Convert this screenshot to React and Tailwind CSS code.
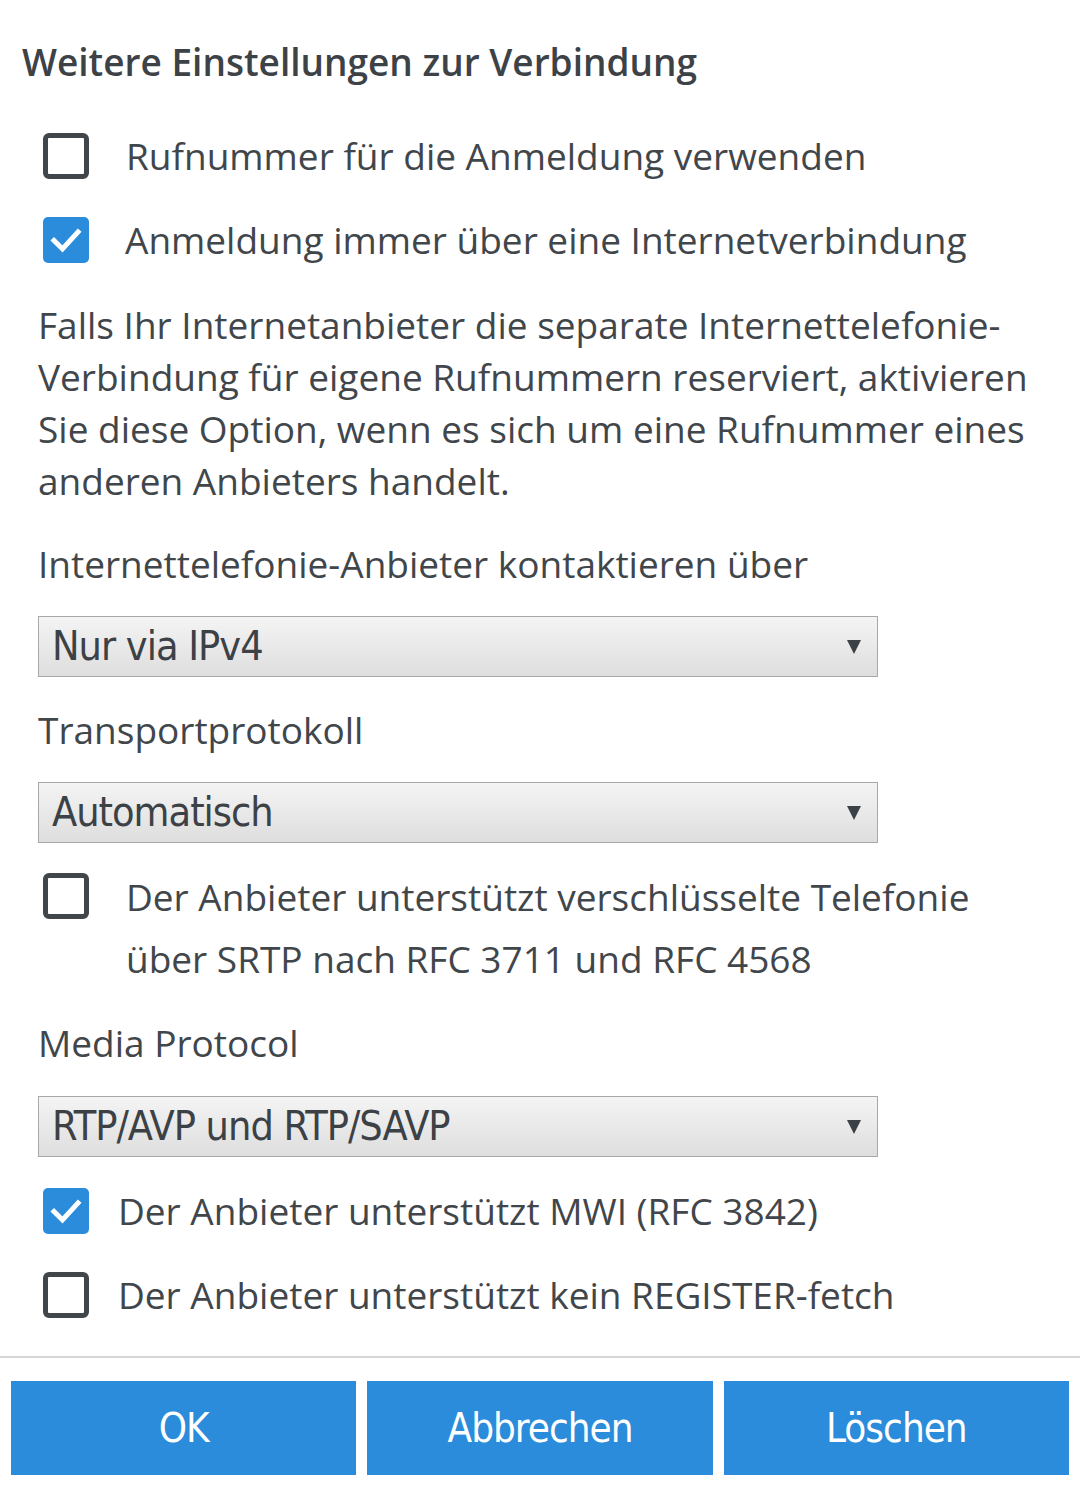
const TEXT = 'text-[#41464b]'

function Box({ checked }) {
    if (checked) {
        return (
            <span className="flex-shrink-0 w-[46px] h-[46px] rounded-[5px] bg-[#2a8cdb] flex items-center justify-center">
                <svg width="34" height="34" viewBox="0 0 34 34" fill="none">
                    <path d="M5 17.5 L13.5 26 L29 9" stroke="white" strokeWidth="5" strokeLinecap="square" />
                </svg>
            </span>
        )
    }
    return <span className="flex-shrink-0 w-[46px] h-[46px] rounded-[6px] border-[5px] border-[#41464b] bg-white" />
}

function Select({ value }) {
    return (
        <div className="mx-[38px] w-[840px] h-[61px] border border-[#a8a8a8] bg-gradient-to-b from-[#f4f4f4] to-[#dedede] flex items-center justify-between pl-[13px] pr-[16px]">
            <span className="text-[41px] font-['DejaVu_Sans_Condensed',sans-serif] tracking-[-1px] text-[#3c4146] leading-none">{value}</span>
            <svg width="14" height="16" viewBox="0 0 14 16">
                <path d="M0 1 H14 L7 15 Z" fill="#3c4146" />
            </svg>
        </div>
    )
}

export default function App() {
    return (
        <div className={`w-[1080px] h-[1492px] bg-white font-['Open_Sans',sans-serif] ${TEXT} pt-[30px]`}>
            <h1 className="h-[64px] pl-[22px] flex items-center text-[37px] font-semibold text-[#3d4247]">
                Weitere Einstellungen zur Verbindung
            </h1>

            {/* first two options */}
            <div className="mt-[20px] h-[84px] pl-[43px] flex items-center gap-[37px] text-[37px]">
                <Box />
                <span>Rufnummer für die Anmeldung verwenden</span>
            </div>
            <div className="h-[84px] pl-[43px] flex items-center gap-[36px] text-[37px]">
                <Box checked />
                <span>Anmeldung immer über eine Internetverbindung</span>
            </div>

            <p className="mt-[17px] px-[38px] text-[37px] leading-[52px]">
                Falls Ihr Internetanbieter die separate Internettelefonie-Verbindung für eigene Rufnummern reserviert, aktivieren Sie diese Option, wenn es sich um eine Rufnummer eines anderen Anbieters handelt.
            </p>

            <div className="mt-[31px] px-[38px] text-[37px] leading-[52px]">Internettelefonie-Anbieter kontaktieren über</div>
            <div className="mt-[26px]"><Select value="Nur via IPv4" /></div>

            <div className="mt-[27px] px-[38px] text-[37px] leading-[52px]">Transportprotokoll</div>
            <div className="mt-[26px]"><Select value="Automatisch" /></div>

            <div className="mt-[23px] pl-[43px] flex items-start gap-[37px] text-[37px] leading-[62px]">
                <div className="mt-[7px] flex-shrink-0 flex"><Box /></div>
                <span className="w-[860px]">Der Anbieter unterstützt verschlüsselte Telefonie über SRTP nach RFC 3711 und RFC 4568</span>
            </div>

            <div className="mt-[27px] px-[38px] text-[37px] leading-[52px]">Media Protocol</div>
            <div className="mt-[27px]"><Select value="RTP/AVP und RTP/SAVP" /></div>

            <div className="mt-[12px] h-[84px] pl-[43px] flex items-center gap-[29px] text-[37px]">
                <Box checked />
                <span>Der Anbieter unterstützt MWI (RFC 3842)</span>
            </div>
            <div className="h-[84px] pl-[43px] flex items-center gap-[29px] text-[37px]">
                <Box />
                <span>Der Anbieter unterstützt kein REGISTER-fetch</span>
            </div>

            <div className="mt-[19px] h-[2px] bg-[#d6d6d6]" />

            <div className="mt-[23px] px-[11px] grid grid-cols-3 gap-[11px]">
                {['OK', 'Abbrechen', 'Löschen'].map(label => (
                    <button key={label} className="h-[94px] bg-[#2a8cdb] text-white text-[40px] font-['DejaVu_Sans_Condensed',sans-serif] tracking-[-1px]">
                        {label}
                    </button>
                ))}
            </div>
        </div>
    )
}
